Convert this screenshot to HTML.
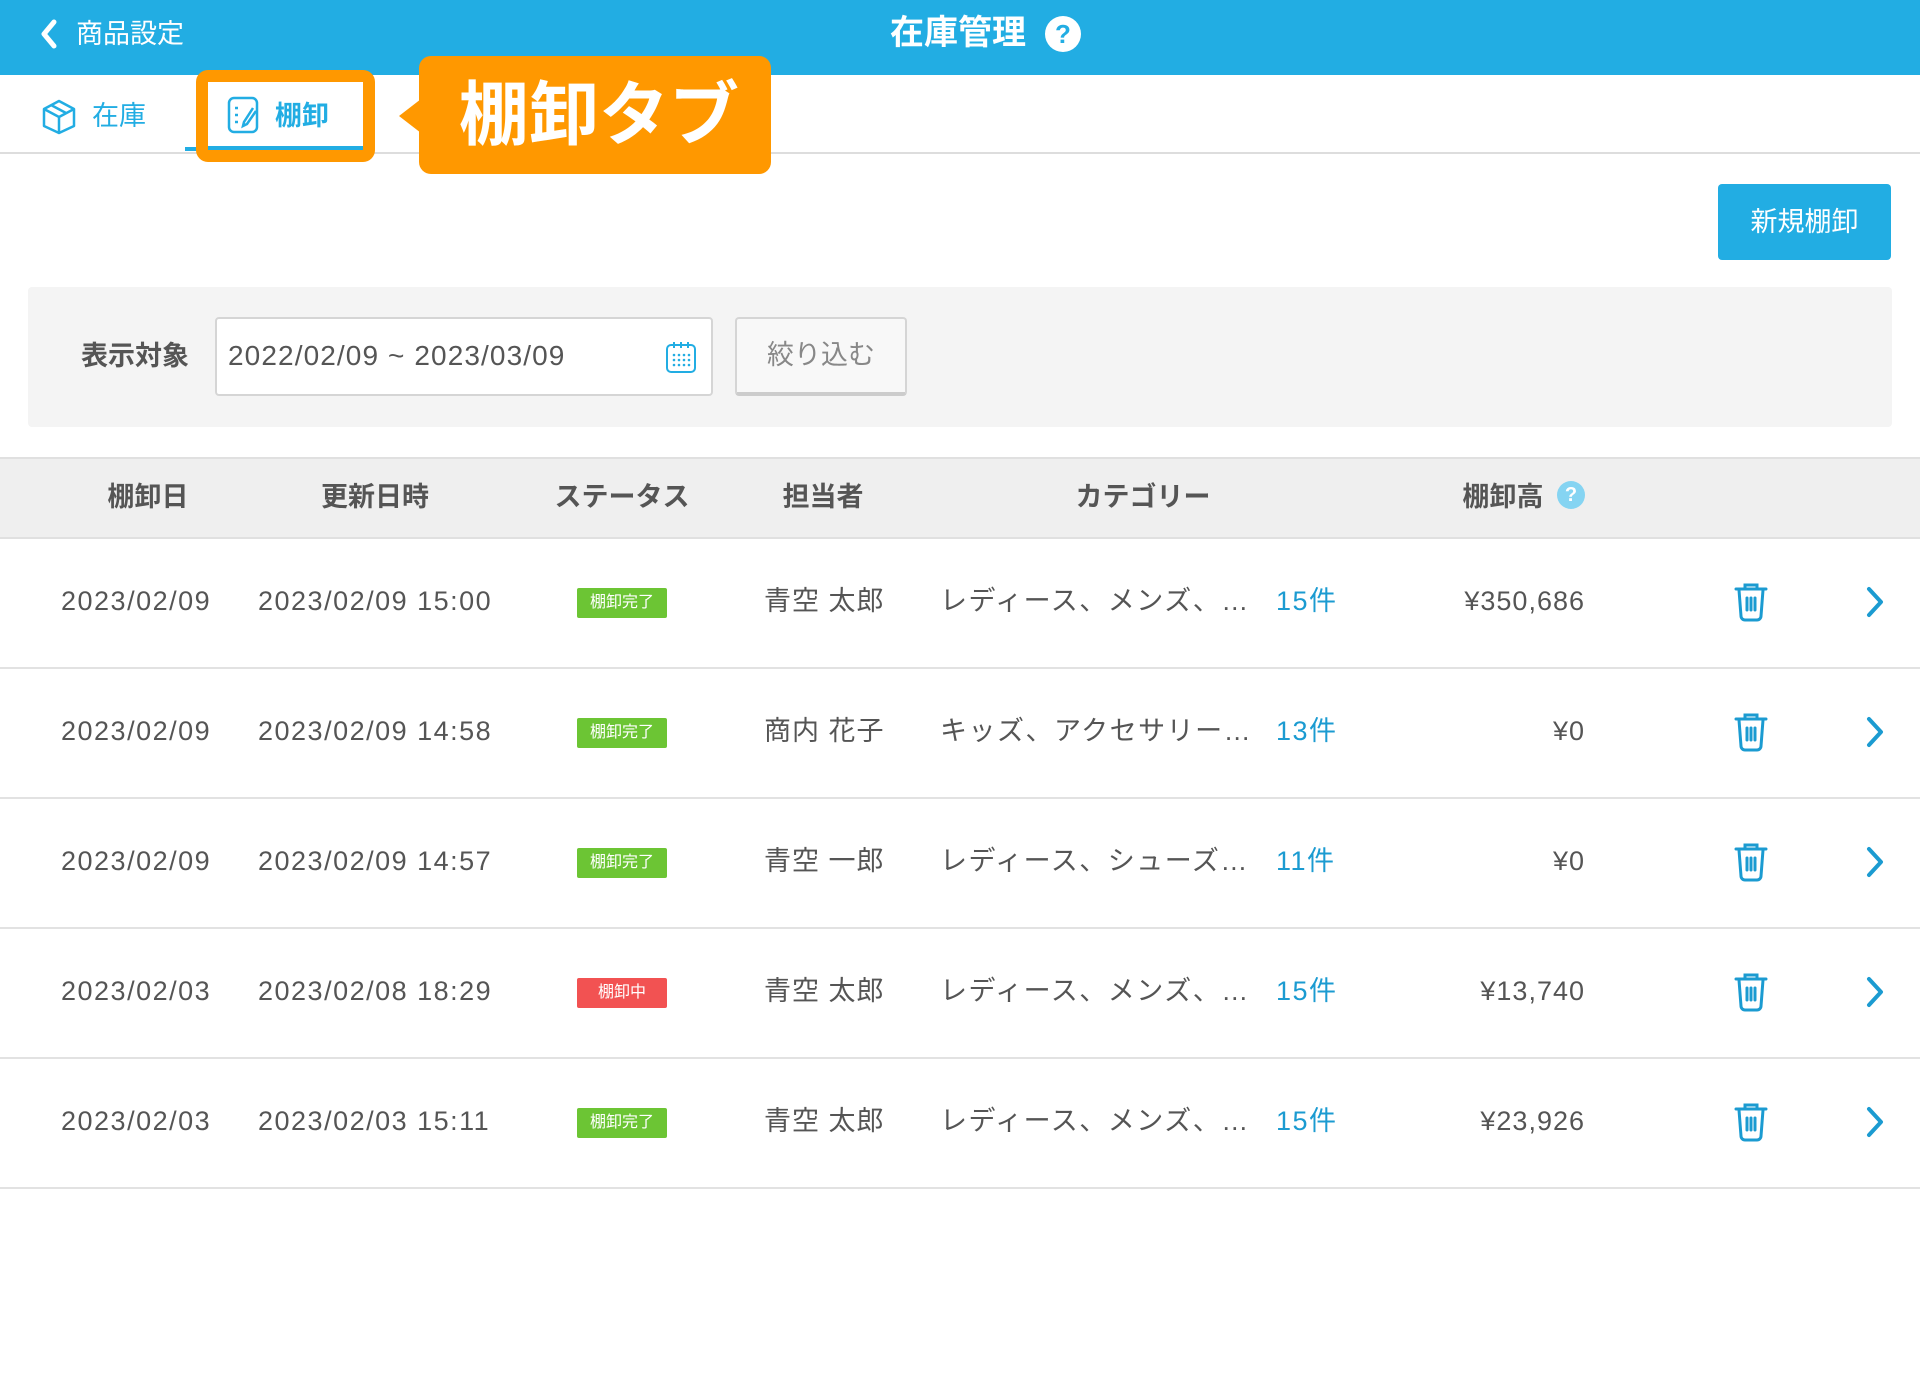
<!DOCTYPE html>
<html><head><meta charset="utf-8"><style>
*{margin:0;padding:0;box-sizing:border-box}
body{width:1920px;height:1400px;background:#fff;font-family:"Liberation Sans","Noto Sans CJK JP",sans-serif;color:#555;position:relative;overflow:hidden}
.a{position:absolute}
.hdr{left:0;top:0;width:1920px;height:75px;background:#22ade3}
.row{left:0;width:1920px;height:130px;border-bottom:2px solid #e2e2e2}
.t{position:absolute;font-size:27px;white-space:nowrap;line-height:1}
.n{letter-spacing:1.5px}
.badge{position:absolute;left:577px;width:90px;height:30px;color:#fff;font-size:16px;text-align:center;line-height:30px;border-radius:2px}
.th{position:absolute;top:475px;font-size:27px;font-weight:bold;color:#555;transform:translateX(-50%);white-space:nowrap}
</style></head><body>
<div class="a hdr"></div>
<svg class="a" style="left:38px;top:18px" width="22" height="32"><path d="M16 4 L6 16 L16 28" stroke="#fff" stroke-width="5" fill="none" stroke-linecap="round" stroke-linejoin="round"/></svg>
<div class="t" style="left:76px;top:21px;color:#fff;font-size:27px">商品設定</div>
<div class="t" style="left:890px;top:16px;color:#fff;font-size:34px;font-weight:bold">在庫管理</div>
<div class="a" style="left:1045px;top:16px;width:36px;height:36px;border-radius:50%;background:#fff;color:#22ade3;font-weight:bold;font-size:26px;text-align:center;line-height:36px">?</div>

<svg class="a" style="left:42px;top:99px" width="34" height="36" viewBox="0 0 34 36"><path d="M17 2 L32 10 L32 27 L17 34 L2 27 L2 10 Z M2 10 L17 18 L32 10 M17 18 L17 34 M9 6 L24 14" stroke="#22ade3" stroke-width="2.5" fill="none" stroke-linejoin="round"/></svg>
<div class="t" style="left:92px;top:103px;color:#22ade3;font-size:27px">在庫</div>
<div class="a" style="left:0;top:152px;width:1920px;height:2px;background:#ddd"></div>
<div class="a" style="left:185px;top:147px;width:20px;height:4px;background:#22ade3"></div>
<div class="a" style="left:196px;top:70px;width:179px;height:92px;border:12px solid #ff9800;border-radius:12px;background:#fff"></div>
<div class="a" style="left:208px;top:146px;width:155px;height:4px;background:#22ade3"></div>
<svg class="a" style="left:227px;top:96px" width="34" height="38" viewBox="0 0 34 38"><rect x="2" y="2" width="28" height="34" rx="5" stroke="#22ade3" stroke-width="2.5" fill="none"/><path d="M8 12 h3 M8 19 h3 M8 26 h3 M26 12 L17 26 L16 30 L20 28 L29 15" stroke="#22ade3" stroke-width="2.5" fill="none"/></svg>
<div class="t" style="left:275px;top:103px;color:#22ade3;font-size:27px;font-weight:bold">棚卸</div>
<div class="a" style="left:419px;top:56px;width:352px;height:118px;background:#ff9800;border-radius:12px"></div>
<div class="a" style="left:399px;top:99px;width:0;height:0;border-top:17px solid transparent;border-bottom:17px solid transparent;border-right:22px solid #ff9800"></div>
<div class="t" style="left:459px;top:80px;color:#fff;font-size:70px;font-weight:bold">棚卸タブ</div>

<div class="a" style="left:1718px;top:184px;width:173px;height:76px;background:#22ade3;border-radius:4px;color:#fff;font-size:27px;text-align:center;line-height:76px">新規棚卸</div>

<div class="a" style="left:28px;top:287px;width:1864px;height:140px;background:#f4f4f4;border-radius:4px"></div>
<div class="t" style="left:81px;top:343px;font-weight:bold;color:#555">表示対象</div>
<div class="a" style="left:215px;top:317px;width:498px;height:79px;background:#fff;border:2px solid #d5d5d5;border-radius:4px"></div>
<div class="t" style="left:228px;top:342px;color:#555;font-size:28px;letter-spacing:1.1px">2022/02/09 ~ 2023/03/09</div>
<svg class="a" style="left:665px;top:340px" width="32" height="34" viewBox="0 0 32 34"><rect x="2" y="5" width="28" height="27" rx="4" stroke="#22ade3" stroke-width="2" fill="none"/><path d="M9 2v6M16 2v6M23 2v6" stroke="#22ade3" stroke-width="2"/><g fill="#22ade3"><circle cx="9" cy="15" r="1.3"/><circle cx="14" cy="15" r="1.3"/><circle cx="19" cy="15" r="1.3"/><circle cx="24" cy="15" r="1.3"/><circle cx="9" cy="20" r="1.3"/><circle cx="14" cy="20" r="1.3"/><circle cx="19" cy="20" r="1.3"/><circle cx="24" cy="20" r="1.3"/><circle cx="9" cy="25" r="1.3"/><circle cx="14" cy="25" r="1.3"/><circle cx="19" cy="25" r="1.3"/><circle cx="24" cy="25" r="1.3"/></g></svg>
<div class="a" style="left:735px;top:317px;width:172px;height:79px;background:#f8f8f8;border:2px solid #d5d5d5;border-bottom:4px solid #ccc;border-radius:4px;color:#888;font-size:27px;text-align:center;line-height:72px">絞り込む</div>

<div class="a" style="left:0;top:457px;width:1920px;height:82px;background:#efefef;border-top:2px solid #e0e0e0;border-bottom:2px solid #e0e0e0"></div>
<div class="th" style="left:148px">棚卸日</div>
<div class="th" style="left:375px">更新日時</div>
<div class="th" style="left:622px">ステータス</div>
<div class="th" style="left:823px">担当者</div>
<div class="th" style="left:1143px">カテゴリー</div>
<div class="th" style="left:1503px">棚卸高</div>
<div class="a" style="left:1557px;top:481px;width:28px;height:28px;border-radius:50%;background:#85d4f2;color:#fff;font-weight:bold;font-size:20px;text-align:center;line-height:28px">?</div>

<div id="rows"></div>
<script>
const d=[["2023/02/09","2023/02/09 15:00",0,"青空 太郎","レディース、メンズ、…","15件","¥350,686"],
["2023/02/09","2023/02/09 14:58",0,"商内 花子","キッズ、アクセサリー…","13件","¥0"],
["2023/02/09","2023/02/09 14:57",0,"青空 一郎","レディース、シューズ…","11件","¥0"],
["2023/02/03","2023/02/08 18:29",1,"青空 太郎","レディース、メンズ、…","15件","¥13,740"],
["2023/02/03","2023/02/03 15:11",0,"青空 太郎","レディース、メンズ、…","15件","¥23,926"]];
let h="";d.forEach((r,i)=>{const y=539+i*130,c=y+63;
h+=`<div class="a row" style="top:${y}px"></div>
<div class="t n" style="left:61px;top:${c-14}px">${r[0]}</div>
<div class="t n" style="left:258px;top:${c-14}px">${r[1]}</div>
<div class="badge" style="top:${c-14}px;background:${r[2]?'#f25252':'#6cc534'}">${r[2]?'棚卸中':'棚卸完了'}</div>
<div class="t" style="left:764px;top:${c-14}px;letter-spacing:1px">${r[3]}</div>
<div class="t" style="left:940px;top:${c-14}px;letter-spacing:1.5px">${r[4]}</div>
<div class="t n" style="left:1276px;top:${c-14}px;color:#1b9bd1">${r[5]}</div>
<div class="t n" style="right:335px;top:${c-14}px;letter-spacing:1px">${r[6]}</div>
<svg class="a" style="left:1733px;top:${c-20}px" width="36" height="40" viewBox="0 0 36 40"><path d="M12 6V3h12v3M3 7h30M6 8l2 26a4 4 0 0 0 4 4h12a4 4 0 0 0 4-4l2-26M14 16v12M18 16v12M22 16v12" stroke="#1b9bd1" stroke-width="3" fill="none" stroke-linecap="round"/></svg>
<svg class="a" style="left:1864px;top:${c-17}px" width="22" height="34"><path d="M5 4 L17 17 L5 30" stroke="#1b9bd1" stroke-width="4" fill="none" stroke-linecap="round" stroke-linejoin="round"/></svg>`;});
document.getElementById("rows").innerHTML=h;
</script>
</body></html>
